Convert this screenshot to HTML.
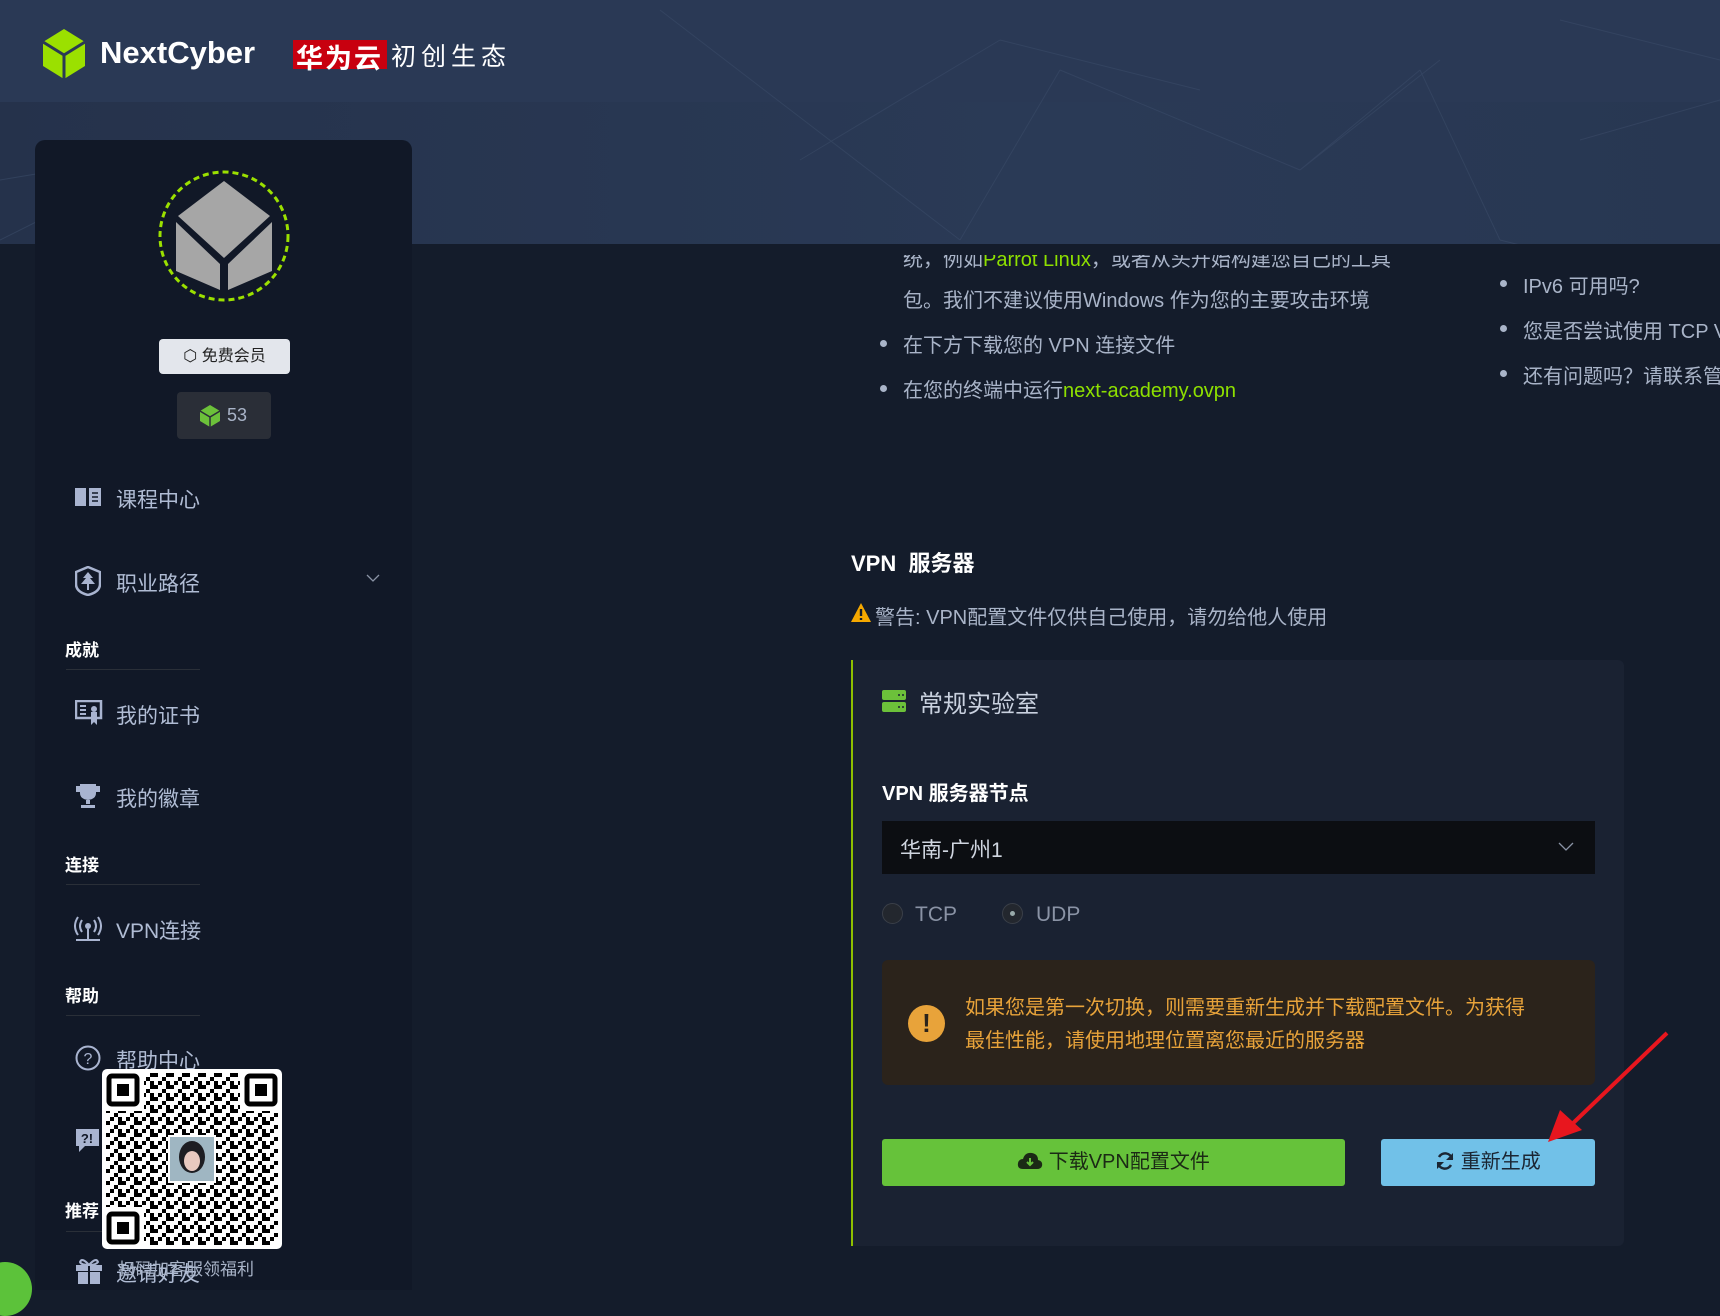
<!DOCTYPE html>
<html><head><meta charset="utf-8"><style>
*{margin:0;padding:0;box-sizing:border-box}
body{width:1720px;height:1284px;overflow:hidden;background:#141c2b;font-family:"Liberation Sans","Noto Sans CJK SC",sans-serif;position:relative;color:#a9b4c8}
.a{position:absolute;white-space:nowrap}
.hdr{left:0;top:0;width:1720px;height:244px;background:linear-gradient(90deg,#25324b,#2a3a56 60%,#283752)}
.band{left:0;top:0;width:1720px;height:102px;background:#2a3955}
.side{left:35px;top:140px;width:377px;height:1150px;background:#111827;border-radius:10px 10px 0 0}
.mi{font-size:21px;color:#b0bcd4}
.sec{font-size:17px;font-weight:bold;color:#fff}
.ln{height:1px;background:#2a2f38;width:134px;left:66px}
.tx{font-size:20px;color:#a9b4c8}
.dot{width:7px;height:7px;border-radius:50%;background:#a9b4c8}
.g{color:#8ee000}
</style></head><body>
<div class="a hdr"></div>
<div class="a band"></div>
<svg class="a" style="left:0;top:0" width="1720" height="244"><g stroke="#3a4b68" stroke-width="1" opacity=".6" fill="none"><path d="M660 10L960 240M1060 70L960 240M1060 70L1300 170M1300 170L1420 70M1420 70L1500 240M1500 240L1540 250M1300 170L1440 60M800 160L1000 40M1000 40L1200 90M1580 140L1720 100M1560 20L1720 60M0 180L180 150M180 150L0 240"/></g></svg>
<!-- logo -->
<svg class="a" style="left:41px;top:29px" width="46" height="50" viewBox="0 0 46 50"><path d="M23 0L44 13V37L23 50L2 37V13Z" fill="#9be000"/><path d="M2 13L23 26L44 13M23 26V50" stroke="#2a3955" stroke-width="3" fill="none"/></svg>
<div class="a" style="left:100px;top:35px;font-size:31px;font-weight:bold;color:#fff">NextCyber</div>
<div class="a" style="left:293px;top:40px;width:94px;height:29px;background:#c8000f"></div>
<div class="a" style="left:296px;top:37px;font-size:27px;font-weight:bold;color:#fff;letter-spacing:2px">华为云</div>
<div class="a" style="left:391px;top:37px;font-size:25px;color:#fff;letter-spacing:5px">初创生态</div>
<!-- sidebar -->
<div class="a side"></div>
<svg class="a" style="left:157px;top:169px" width="134" height="134"><circle cx="67" cy="67" r="64" fill="none" stroke="#9be000" stroke-width="3" stroke-dasharray="6 4"/><path d="M67 12L113 47L67 89L21 47Z" fill="#a6a6a6"/><path d="M19 53L63 95V121L19 102Z M115 53L71 95V121L115 102Z" fill="#a6a6a6"/></svg>
<div class="a" style="left:159px;top:339px;width:131px;height:35px;background:#e3e6ec;border-radius:4px;font-size:16px;color:#222;text-align:center;line-height:35px">⬡ 免费会员</div>
<div class="a" style="left:177px;top:392px;width:94px;height:47px;background:#2a2e37;border-radius:4px;font-size:18px;color:#a9b4c8;line-height:47px;padding-left:50px">53</div>
<svg class="a" style="left:200px;top:405px" width="20" height="22"><path d="M10 0L20 6V16L10 22L0 16V6Z" fill="#6cc13a"/><path d="M0 6L10 12L20 6M10 12V22" stroke="#2a2e37" stroke-width="1.5" fill="none"/></svg>
<svg class="a" style="left:74px;top:486px" width="28" height="22"><path d="M1 2H12V20H1Z M15 2H27V20H15Z" fill="#a9b4d0"/><path d="M18 7H24M18 11H24M18 15H24" stroke="#111827" stroke-width="1.5"/></svg>
<div class="a mi" style="left:116px;top:484px">课程中心</div>
<svg class="a" style="left:75px;top:566px" width="26" height="30"><path d="M13 1L25 6V18Q25 26 13 29Q1 26 1 18V6Z" fill="none" stroke="#a9b4d0" stroke-width="2.5"/><path d="M13 6L8 12H11L6 18H12V24H14V18H20L15 12H18Z" fill="#a9b4d0"/></svg>
<div class="a mi" style="left:116px;top:568px">职业路径</div>
<svg class="a" style="left:366px;top:574px" width="14" height="9"><path d="M1 1L7 7L13 1" stroke="#8a93a5" fill="none" stroke-width="1.3"/></svg>
<div class="a sec" style="left:65px;top:636px">成就</div><div class="a ln" style="top:669px"></div>
<svg class="a" style="left:75px;top:700px" width="28" height="26"><rect x="1" y="1" width="25" height="17" fill="none" stroke="#a9b4d0" stroke-width="2.5"/><path d="M5 6H11M5 10H11M5 14H11" stroke="#a9b4d0" stroke-width="2"/><path d="M16 12V25L19 22L22 25V12Z" fill="#a9b4d0"/><circle cx="19" cy="9" r="3" fill="#a9b4d0"/></svg>
<div class="a mi" style="left:116px;top:700px">我的证书</div>
<svg class="a" style="left:75px;top:783px" width="26" height="26"><path d="M5 1H21V10Q21 16 13 17Q5 16 5 10Z M1 3H5V9H1Z M21 3H25V9H21Z" fill="#a9b4d0"/><path d="M11 17H15V21H11Z M6 22H20V25H6Z" fill="#a9b4d0"/></svg>
<div class="a mi" style="left:116px;top:783px">我的徽章</div>
<div class="a sec" style="left:65px;top:851px">连接</div><div class="a ln" style="top:884px"></div>
<svg class="a" style="left:74px;top:915px" width="28" height="27"><circle cx="14" cy="11" r="3" fill="#a9b4d0"/><path d="M8 5Q4 11 8 17M20 5Q24 11 20 17M4 2Q-2 11 4 20M24 2Q30 11 24 20" stroke="#a9b4d0" stroke-width="2" fill="none"/><path d="M14 14V24M2 25H26" stroke="#a9b4d0" stroke-width="2"/></svg>
<div class="a mi" style="left:116px;top:915px">VPN连接</div>
<div class="a sec" style="left:65px;top:982px">帮助</div><div class="a ln" style="top:1015px"></div>
<svg class="a" style="left:75px;top:1045px" width="26" height="26"><circle cx="13" cy="13" r="11.5" fill="none" stroke="#a9b4d0" stroke-width="2"/><text x="13" y="19" text-anchor="middle" font-size="16" fill="#a9b4d0" font-family="Liberation Sans">?</text></svg>
<div class="a mi" style="left:116px;top:1045px">帮助中心</div>
<svg class="a" style="left:75px;top:1128px" width="26" height="26"><path d="M1 1H24V18H10L4 24V18H1Z" fill="#a9b4d0"/><text x="12" y="15" text-anchor="middle" font-size="13" font-weight="bold" fill="#111827" font-family="Liberation Sans">?!</text></svg>
<div class="a sec" style="left:65px;top:1197px">推荐</div><div class="a ln" style="top:1231px"></div>
<svg class="a" style="left:74px;top:1257px" width="30" height="27"><path d="M2 8H28V14H2Z M4 15H26V27H4Z" fill="#a9b4d0"/><path d="M15 8V27" stroke="#111827" stroke-width="2"/><path d="M15 8Q8 0 6 5Q7 8 15 8Q22 8 24 5Q22 0 15 8" fill="none" stroke="#a9b4d0" stroke-width="2"/></svg>
<div class="a mi" style="left:116px;top:1258px">邀请好友</div>
<div class="a" style="left:118px;top:1255px;font-size:17px;color:#a9b4c8">扫码加客服领福利</div>
<!-- QR -->
<div class="a" style="left:102px;top:1069px;width:180px;height:180px;background:#fff;border-radius:5px"></div>
<svg class="a" style="left:106px;top:1073px" width="172" height="172"><defs><pattern id="q" width="16" height="12" patternUnits="userSpaceOnUse"><rect x="0" y="0" width="4" height="4" fill="#000"/><rect x="8" y="4" width="4" height="4" fill="#000"/><rect x="4" y="8" width="4" height="4" fill="#000"/><rect x="12" y="0" width="4" height="4" fill="#000"/><rect x="12" y="8" width="4" height="4" fill="#000"/></pattern></defs><rect x="0" y="0" width="172" height="172" fill="url(#q)"/><g fill="#fff"><rect x="0" y="0" width="38" height="38"/><rect x="134" y="0" width="38" height="38"/><rect x="0" y="134" width="38" height="38"/><rect x="62" y="62" width="48" height="48"/></g><g fill="none" stroke="#000" stroke-width="5"><rect x="3" y="3" width="28" height="28" rx="3"/><rect x="141" y="3" width="28" height="28" rx="3"/><rect x="3" y="141" width="28" height="28" rx="3"/></g><g fill="#000"><rect x="11" y="11" width="12" height="12"/><rect x="149" y="11" width="12" height="12"/><rect x="11" y="149" width="12" height="12"/></g><rect x="64" y="64" width="44" height="44" fill="#9fb6c2"/><ellipse cx="86" cy="84" rx="13" ry="16" fill="#1d1d22"/><ellipse cx="86" cy="88" rx="8" ry="10" fill="#e8c9c0"/></svg>
<div class="a" style="left:-22px;top:1262px;width:54px;height:54px;border-radius:50%;background:#5cc23a"></div>
<!-- main text -->
<div class="a tx" style="left:903px;top:255px;height:22px;overflow:hidden;font-size:20px"><div style="margin-top:-12px">统，例如<span class="g">Parrot Linux</span>，或者从头开始构建您自己的工具</div></div>
<div class="a tx" style="left:903px;top:284px">包。我们不建议使用Windows 作为您的主要攻击环境</div>
<div class="a dot" style="left:880px;top:340px"></div><div class="a tx" style="left:903px;top:329px">在下方下载您的 VPN 连接文件</div>
<div class="a dot" style="left:880px;top:385px"></div><div class="a tx" style="left:903px;top:374px">在您的终端中运行<span class="g">next-academy.ovpn</span></div>
<div class="a dot" style="left:1500px;top:280px"></div><div class="a tx" style="left:1523px;top:270px">IPv6 可用吗?</div>
<div class="a dot" style="left:1500px;top:325px"></div><div class="a tx" style="left:1523px;top:315px">您是否尝试使用 TCP VPN</div>
<div class="a dot" style="left:1500px;top:370px"></div><div class="a tx" style="left:1523px;top:360px">还有问题吗？请联系管理员</div>
<div class="a" style="left:851px;top:546px;font-size:22px;font-weight:bold;color:#fff">VPN&nbsp; 服务器</div>
<svg class="a" style="left:851px;top:603px" width="20" height="19"><path d="M10 0L20 19H0Z" fill="#f5a800"/><path d="M10 6V13M10 15V17" stroke="#141c2b" stroke-width="2.4"/></svg>
<div class="a tx" style="left:875px;top:601px">警告: VPN配置文件仅供自己使用，请勿给他人使用</div>
<!-- card -->
<div class="a" style="left:851px;top:660px;width:773px;height:586px;background:#1a2232;border-radius:0 6px 6px 0;border-left:2px solid #8ec000"></div>
<svg class="a" style="left:882px;top:689px" width="24" height="24"><rect x="0" y="1" width="24" height="10" rx="2" fill="#6cc13a"/><rect x="0" y="13" width="24" height="10" rx="2" fill="#6cc13a"/><path d="M16 6H18M20 6H22M16 18H18M20 18H22" stroke="#1a2232" stroke-width="1.5"/></svg>
<div class="a" style="left:919px;top:684px;font-size:24px;color:#c9d1df">常规实验室</div>
<div class="a" style="left:882px;top:777px;font-size:20px;font-weight:bold;color:#fff">VPN 服务器节点</div>
<div class="a" style="left:882px;top:821px;width:713px;height:53px;background:#0c0e12"></div>
<div class="a" style="left:900px;top:834px;font-size:21px;color:#d0d6e0">华南-广州1</div>
<svg class="a" style="left:1558px;top:842px" width="16" height="10"><path d="M1 1L8 8L15 1" stroke="#8a93a5" fill="none" stroke-width="1.3"/></svg>
<div class="a" style="left:882px;top:903px;width:21px;height:21px;border-radius:50%;background:#23272e;border:1px solid #3a3f48"></div>
<div class="a" style="left:915px;top:903px;font-size:21px;color:#8a93a5">TCP</div>
<div class="a" style="left:1002px;top:903px;width:21px;height:21px;border-radius:50%;background:#23272e;border:1px solid #3a3f48"></div>
<div class="a" style="left:1010px;top:911px;width:5px;height:5px;border-radius:50%;background:#9aa"></div>
<div class="a" style="left:1036px;top:903px;font-size:21px;color:#8a93a5">UDP</div>
<div class="a" style="left:882px;top:960px;width:713px;height:125px;background:#2b231b;border-radius:6px"></div>
<div class="a" style="left:908px;top:1005px;width:37px;height:37px;border-radius:50%;background:#e8a33a;color:#2b231b;font-size:26px;font-weight:bold;text-align:center;line-height:37px">!</div>
<div class="a" style="left:965px;top:992px;font-size:20px;color:#e8a33a;line-height:33px">如果您是第一次切换，则需要重新生成并下载配置文件。为获得<br>最佳性能，请使用地理位置离您最近的服务器</div>
<div class="a" style="left:882px;top:1139px;width:463px;height:47px;background:#66c23a;border-radius:3px;text-align:center;line-height:47px;font-size:20px;color:#1b2a15"><svg width="26" height="20" style="vertical-align:-3px"><path d="M6 18Q0 18 1 12Q2 8 6 8Q8 1 15 2Q21 3 21 9Q26 10 25 15Q24 18 20 18Z" fill="#1b2a15"/><path d="M13 7V14M10 11L13 14L16 11" stroke="#66c23a" stroke-width="2" fill="none"/></svg> 下载VPN配置文件</div>
<div class="a" style="left:1381px;top:1139px;width:214px;height:47px;background:#71c1e8;border-radius:3px;text-align:center;line-height:47px;font-size:20px;color:#1b2633"><svg width="20" height="20" style="vertical-align:-3px"><path d="M17 8A7 7 0 0 0 4 6M3 12A7 7 0 0 0 16 14" stroke="#1b2633" stroke-width="2.5" fill="none"/><path d="M18 2V9H11Z M2 18V11H9Z" fill="#1b2633"/></svg> 重新生成</div>
<svg class="a" style="left:1540px;top:1030px" width="130" height="115"><path d="M127 3L28 98" stroke="#e8161e" stroke-width="4"/><path d="M8 112L20 80L42 100Z" fill="#e8161e"/></svg>
</body></html>
